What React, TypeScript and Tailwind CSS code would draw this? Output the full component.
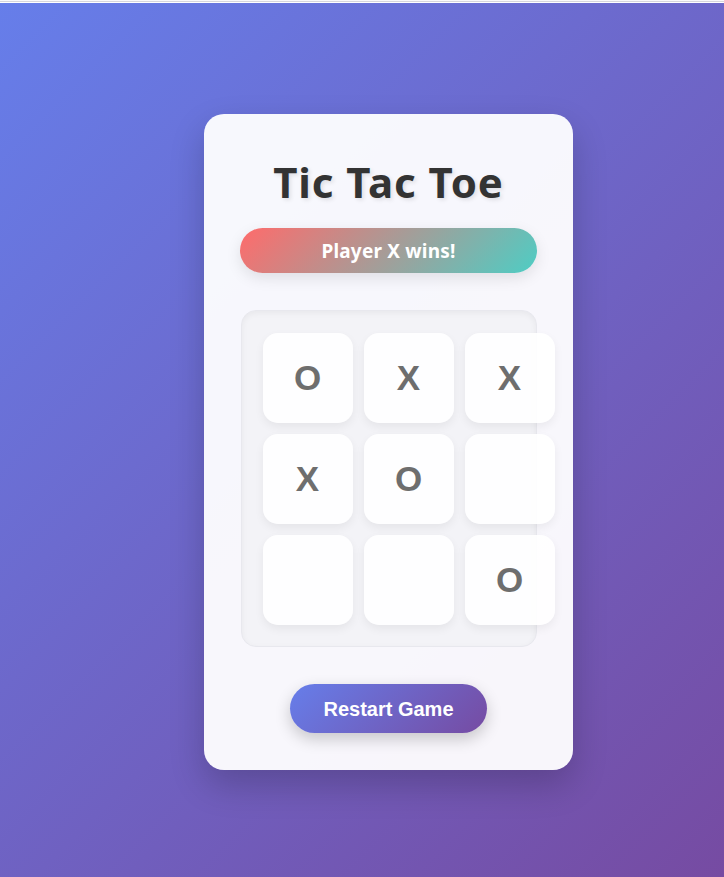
const board = ['O', 'X', 'X', 'X', 'O', '', '', '', 'O'];

export default function App() {
  return (
    <div className="min-h-[877px] w-full bg-[linear-gradient(135deg,#667eea_0%,#764ba2_100%)]">
      {/* thin top strip */}
      <div className="h-[3px] bg-[#f4f4f6] border-b border-t border-b-white border-t-[#fafafa] [box-shadow:inset_0_-1px_0_#d6d6dc]" />

      <div className="flex justify-center pl-[53px] pt-[111px]">
        <div className="w-[369px] h-[656px] rounded-[20px] bg-[rgba(255,255,255,0.95)] shadow-[0_15px_35px_rgba(0,0,0,0.2)] flex flex-col items-center pt-[38px]">
          <h1 className="text-[42px] leading-[60px] font-bold text-[#333] [text-shadow:2px_2px_4px_rgba(0,0,0,0.1)] font-['Noto_Sans',sans-serif] tracking-[0.9px]">
            Tic Tac Toe
          </h1>

          <div className="mt-[16px] w-[297px] h-[45px] rounded-full bg-[linear-gradient(135deg,#ff6b6b,#4ecdc4)] shadow-[0_5px_15px_rgba(0,0,0,0.1)] flex items-center justify-center pt-[2px] text-white text-[19px] font-bold font-['Noto_Sans',sans-serif] tracking-[0.2px]">
            Player X wins!
          </div>

          <div className="mt-[37px] w-[296px] h-[337px] rounded-[15px] bg-[#f3f3f7] border border-[#e8e8ee] shadow-[inset_0_2px_6px_rgba(0,0,0,0.05)] pt-[22px] pl-[21px]">
            <div className="grid grid-cols-[repeat(3,90px)] gap-[11px] w-[292px]">
              {board.map((v, i) => (
                <div
                  key={i}
                  className="h-[90px] rounded-[15px] bg-[rgba(255,255,255,0.9)] shadow-[0_4px_10px_rgba(0,0,0,0.06)] flex items-center justify-center text-[35px] font-bold text-[#6e6e6e] font-['Liberation_Sans',Arial,sans-serif]"
                >
                  {v}
                </div>
              ))}
            </div>
          </div>

          <button className="mt-[37px] w-[197px] h-[49px] rounded-full bg-[linear-gradient(135deg,#667eea,#764ba2)] shadow-[0_6px_16px_rgba(0,0,0,0.2)] text-white text-[20px] font-bold font-['Liberation_Sans',Arial,sans-serif]">
            Restart Game
          </button>
        </div>
      </div>
    </div>
  );
}
